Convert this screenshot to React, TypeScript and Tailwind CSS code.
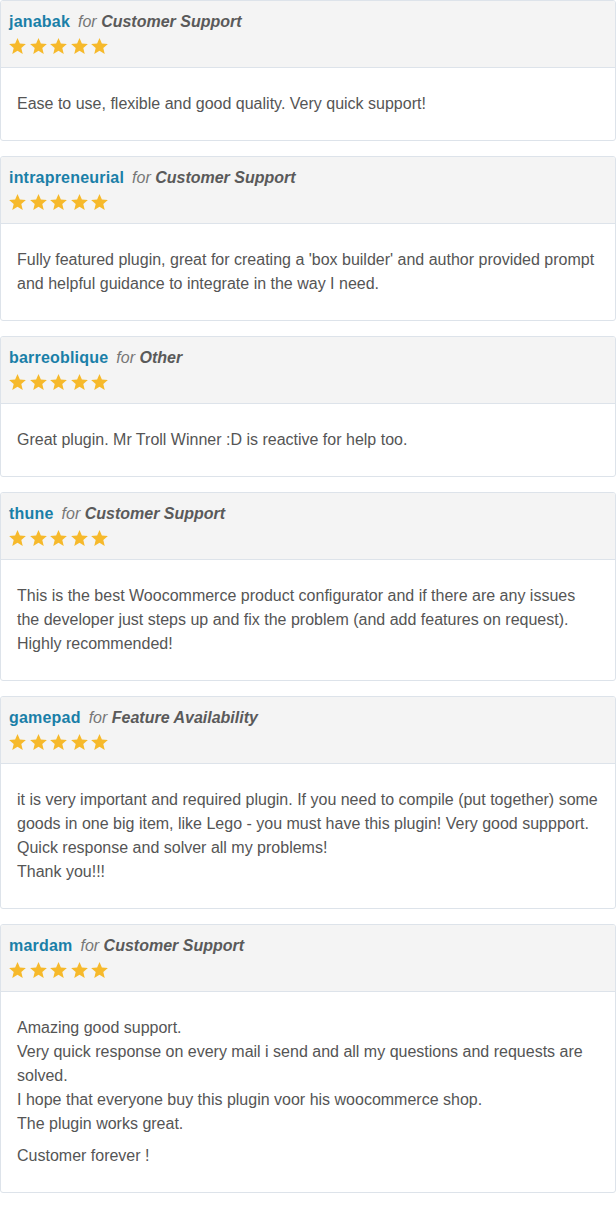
const REVIEWS = [
  {
    name: 'janabak',
    topic: 'Customer Support',
    body: [['Ease to use, flexible and good quality. Very quick support!']],
  },
  {
    name: 'intrapreneurial',
    topic: 'Customer Support',
    body: [["Fully featured plugin, great for creating a 'box builder' and author provided prompt and helpful guidance to integrate in the way I need."]],
  },
  {
    name: 'barreoblique',
    topic: 'Other',
    body: [['Great plugin. Mr Troll Winner :D is reactive for help too.']],
  },
  {
    name: 'thune',
    topic: 'Customer Support',
    body: [['This is the best Woocommerce product configurator and if there are any issues the developer just steps up and fix the problem (and add features on request). Highly recommended!']],
  },
  {
    name: 'gamepad',
    topic: 'Feature Availability',
    body: [[
      'it is very important and required plugin. If you need to compile (put together) some goods in one big item, like Lego - you must have this plugin! Very good suppport. Quick response and solver all my problems!',
      'Thank you!!!',
    ]],
  },
  {
    name: 'mardam',
    topic: 'Customer Support',
    body: [
      [
        'Amazing good support.',
        'Very quick response on every mail i send and all my questions and requests are solved.',
        'I hope that everyone buy this plugin voor his woocommerce shop.',
        'The plugin works great.',
      ],
      ['Customer forever !'],
    ],
  },
];

function Star() {
  return (
    <svg width="19" height="19" viewBox="0 0 24 24" className="block">
      <path
        d="M12 1.2l3 7.1 7.6.6-5.8 5 1.8 7.5L12 17.4l-6.6 4 1.8-7.5-5.8-5 7.6-.6L12 1.2z"
        fill="#f6b92b"
      />
    </svg>
  );
}

export default function App() {
  return (
    <div className="w-[616px] bg-white font-['Liberation_Sans',Arial,sans-serif]">
      {REVIEWS.map((r) => (
        <div key={r.name} className="mb-[15px] rounded-[3px] border border-[#dde3ea] overflow-hidden">
          <div className="bg-[#f4f4f4] border-b border-[#dde3ea] pl-2 py-[9px]">
            <div className="h-6 leading-6 text-base">
              <span className="font-bold text-[#1a7fa8] tracking-[0.2px]">{r.name}</span>
              <span className="italic text-[#777] ml-[8px]">for</span>{' '}
              <span className="italic font-bold text-[#5a5a5a]">{r.topic}</span>
            </div>
            <div className="h-6 flex items-center gap-[1.5px] -ml-[1px]">
              {[0, 1, 2, 3, 4].map((i) => (
                <Star key={i} />
              ))}
            </div>
          </div>
          <div className="px-4 py-6 text-base leading-6 text-[#555]">
            {r.body.map((para, pi) => (
              <p key={pi} className={pi > 0 ? 'mt-2' : ''}>
                {para.map((line, li) => (
                  <span key={li}>
                    {li > 0 && <br />}
                    {line}
                  </span>
                ))}
              </p>
            ))}
          </div>
        </div>
      ))}
    </div>
  );
}
